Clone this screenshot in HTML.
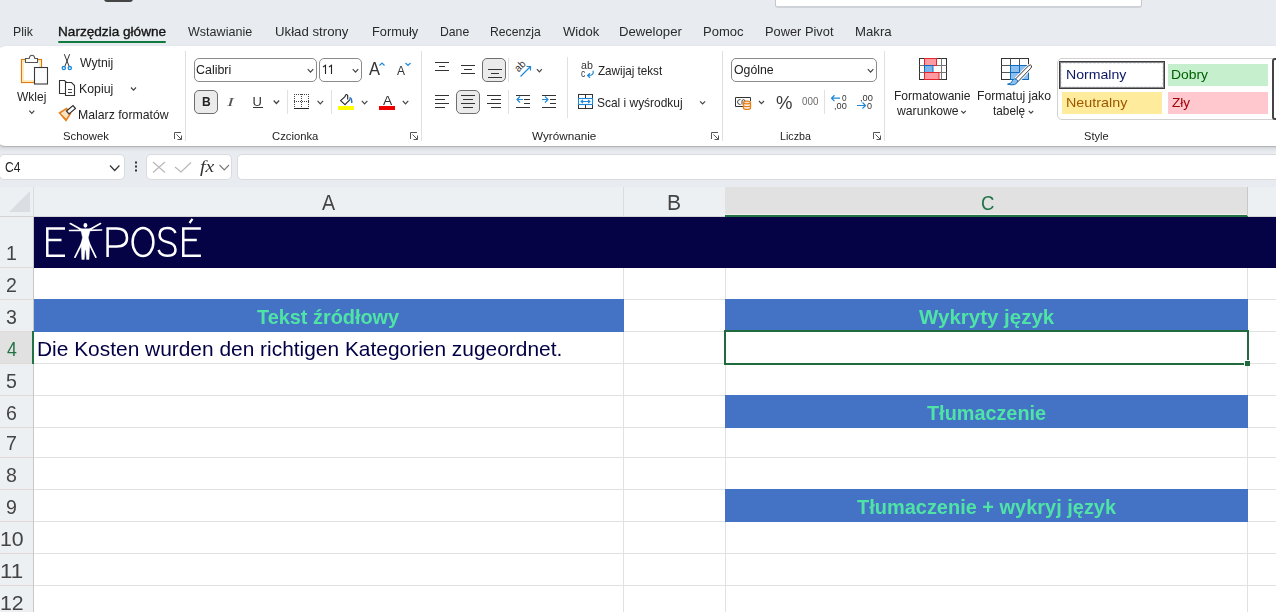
<!DOCTYPE html>
<html><head><meta charset="utf-8"><style>
html,body{margin:0;padding:0}
body{width:1276px;height:612px;overflow:hidden;position:relative;background:#e8ecf0;font-family:"Liberation Sans",sans-serif}
#L0 div,#L1 div{position:absolute;box-sizing:border-box}
#T{position:absolute;left:0;top:0;width:1276px;height:612px;will-change:transform}
#T span{position:absolute;white-space:nowrap;line-height:1;transform-origin:0 0}
svg{position:absolute;left:0;top:0}
</style></head><body>
<div id="L0">
<div style="position:absolute;left:104px;top:-6px;width:29px;height:8px;background:#454545;border-radius:3px"></div>
<div style="position:absolute;left:775px;top:-10px;width:367px;height:18px;background:#fff;border:1px solid #c4c7cb;border-bottom:2px solid #cfd2d6;border-radius:3px"></div>
<div style="position:absolute;left:58px;top:41px;width:108px;height:2px;background:#117a3e;border-radius:1px"></div>
<div style="position:absolute;left:0;top:146px;width:1276px;height:6px;background:linear-gradient(#d9dbe0,#e1e4e8 45%,#e8ecf0)"></div>
</div>
<svg id="S0" width="1276" height="612" style="position:absolute;left:0;top:0">
</svg>
<div id="L1" style="position:absolute;left:0;top:0;width:1276px;height:612px">
<div style="position:absolute;left:-3px;top:46px;width:1300px;height:100px;background:#fff;border-radius:8px;box-shadow:0 1px 1px rgba(0,0,0,0.14), 0 2px 4px rgba(0,0,0,0.06), 0 0 1px rgba(0,0,0,0.12)"></div>
<div style="position:absolute;left:194px;top:58px;width:123px;height:24px;border:1px solid #8a8a8a;border-radius:5px;background:#fff"></div>
<div style="position:absolute;left:319px;top:58px;width:43px;height:24px;border:1px solid #8a8a8a;border-radius:5px;background:#fff"></div>
<div style="position:absolute;left:194px;top:90px;width:24px;height:24px;border:1px solid #6e6e6e;border-radius:5px;background:#ebebeb"></div>
<div style="position:absolute;left:482px;top:58px;width:24px;height:24px;border:1px solid #6e6e6e;border-radius:5px;background:#ebebeb"></div>
<div style="position:absolute;left:456px;top:90px;width:24px;height:24px;border:1px solid #6e6e6e;border-radius:5px;background:#ebebeb"></div>
<div style="position:absolute;left:731px;top:58px;width:146px;height:24px;border:1px solid #8a8a8a;border-radius:5px;background:#fff"></div>
<div style="position:absolute;left:1057px;top:58px;width:230px;height:62px;border:1px solid #d0d0d0;border-radius:5px;background:#fff"></div>
<div style="position:absolute;left:1059px;top:61px;width:106px;height:28px;border:1px solid #3c3c3c;box-shadow:inset 0 0 0 1px #8a8a8a;background:#fff"></div>
<div style="position:absolute;left:1272px;top:58px;width:20px;height:62px;border:2px solid #444;border-radius:3px;background:#fff"></div>
<div style="position:absolute;left:-1px;top:154px;width:126px;height:26px;border:1px solid #d9dbde;border-radius:5px;background:#fff"></div>
<div style="position:absolute;left:146px;top:154px;width:86px;height:26px;border:1px solid #d9dbde;border-radius:5px;background:#fff"></div>
<div style="position:absolute;left:237px;top:154px;width:1060px;height:26px;border:1px solid #d9dbde;border-radius:5px;background:#fff"></div>
</div>
<svg width="1276" height="612" viewBox="0 0 1276 612" shape-rendering="auto">
<rect x="185" y="51" width="1" height="90" fill="#e0e0e0"/>
<rect x="421" y="51" width="1" height="90" fill="#e0e0e0"/>
<rect x="722" y="51" width="1" height="90" fill="#e0e0e0"/>
<rect x="884" y="51" width="1" height="90" fill="#e0e0e0"/>
<rect x="287" y="90" width="1" height="24" fill="#e0e0e0"/>
<rect x="331" y="90" width="1" height="24" fill="#e0e0e0"/>
<rect x="508" y="58" width="1" height="24" fill="#e0e0e0"/>
<rect x="508" y="90" width="1" height="24" fill="#e0e0e0"/>
<rect x="567" y="57" width="1" height="61" fill="#e0e0e0"/>
<rect x="824" y="90" width="1" height="24" fill="#e0e0e0"/>
<g stroke="#555" stroke-width="1" fill="none"><path d="M174.5 139V132.5H181"/><path d="M176.5 134.5L181.5 139.5M177.5 139.5H181.5V135.5"/></g>
<g stroke="#555" stroke-width="1" fill="none"><path d="M410.5 139V132.5H417"/><path d="M412.5 134.5L417.5 139.5M413.5 139.5H417.5V135.5"/></g>
<g stroke="#555" stroke-width="1" fill="none"><path d="M711.5 139V132.5H718"/><path d="M713.5 134.5L718.5 139.5M714.5 139.5H718.5V135.5"/></g>
<g stroke="#555" stroke-width="1" fill="none"><path d="M873.5 139V132.5H880"/><path d="M875.5 134.5L880.5 139.5M876.5 139.5H880.5V135.5"/></g>
<path d="M29.3 110.7L31.8 113.3L34.3 110.7" fill="none" stroke="#444" stroke-width="1.2"/>
<path d="M131.0 87.5L133.5 90.1L136.0 87.5" fill="none" stroke="#444" stroke-width="1.2"/>
<rect x="21.5" y="59.5" width="20" height="23" fill="#fff" stroke="#e07a10" stroke-width="1.2"/>
<rect x="23" y="61" width="17" height="20" fill="none" stroke="#fbe4a8" stroke-width="1.4"/>
<path d="M25.5 62.5V58.5H29.2Q29.5 55.2 32 55.2Q34.5 55.2 34.8 58.5H37.5V62.5Z" fill="#fff" stroke="#555" stroke-width="1.1"/>
<rect x="34.5" y="67.5" width="13" height="16.5" fill="#fbfcfe" stroke="#3a3a3a" stroke-width="1.1"/>
<g fill="none" stroke="#333" stroke-width="1"><path d="M64.3 54.2L69.1 66.3M69.7 54.2L64.9 66.3"/></g>
<g fill="none" stroke="#1e88d8" stroke-width="1.3"><circle cx="63.8" cy="68.1" r="1.6"/><circle cx="69.8" cy="68.1" r="1.6"/></g>
<g fill="#fff" stroke="#333" stroke-width="1.1"><path d="M65.5 93.5H59.5V80.5H64.5L66.5 82.5"/><path d="M65.5 82.5H71.5L74.5 85.5V95.5H65.5Z"/><path d="M68 89.5H72M68 92.5H72" stroke-width="0.9"/></g>
<path d="M59.5 113L66.5 108.5L70.5 113.5L66 120.5Z" fill="#fbe3c2" stroke="#e8801a" stroke-width="1.5"/>
<path d="M61 114.5L66 119" stroke="#e8801a" stroke-width="1"/>
<path d="M66.5 111L73 105.5L75.5 108.5L69 114Z" fill="#fff" stroke="#333" stroke-width="1.2"/>
<path d="M325.5 74V65.3L323 67M331.5 74V65.3L329 67" fill="none" stroke="#222" stroke-width="1.1"/>
<path d="M307.75 69.1L310.5 72.1L313.25 69.1" fill="none" stroke="#444" stroke-width="1.2"/>
<path d="M352.75 69.1L355.5 72.1L358.25 69.1" fill="none" stroke="#444" stroke-width="1.2"/>
<path d="M379.5 65.5L382 63L384.5 65.5" fill="none" stroke="#1e88d8" stroke-width="1.2"/>
<path d="M405.5 63L408 65.5L410.5 63" fill="none" stroke="#1e88d8" stroke-width="1.2"/>
<rect x="253" y="107" width="10" height="1" fill="#333"/>
<path d="M273.65 100.5L276.4 103.5L279.15 100.5" fill="none" stroke="#444" stroke-width="1.2"/>
<g fill="none" stroke="#444" stroke-width="1" stroke-dasharray="1 1" shape-rendering="crispEdges"><path d="M294.5 94V108M308.5 94V108M294 94.5H309M301.5 94V108M294 101.5H309"/></g>
<rect x="294" y="108" width="15" height="1" fill="#222"/>
<path d="M317.55 100.8L320.3 103.8L323.05 100.8" fill="none" stroke="#444" stroke-width="1.2"/>
<path d="M345.3 96.3L340.6 100.6L345 104.6L350.2 99.3" fill="#fff" stroke="#222" stroke-width="1.1" stroke-linejoin="round"/><path d="M345.3 96.6V95.5Q346.5 93.5 347.7 95.5V99.6" fill="none" stroke="#222" stroke-width="1.1"/><path d="M349.3 98.3Q351.8 97 351.8 103" fill="none" stroke="#1e78d0" stroke-width="1.5"/>
<rect x="338" y="106" width="16" height="4" fill="#ffff00" />
<path d="M361.85 100.8L364.6 103.8L367.35 100.8" fill="none" stroke="#444" stroke-width="1.2"/>
<rect x="379" y="106" width="16" height="4" fill="#ef0000" />
<path d="M402.75 100.8L405.5 103.8L408.25 100.8" fill="none" stroke="#444" stroke-width="1.2"/>
<rect x="435" y="62" width="14" height="1" fill="#333"/>
<rect x="439" y="66" width="6" height="1" fill="#333"/>
<rect x="435" y="70" width="14" height="1" fill="#333"/>
<rect x="461" y="65" width="14" height="1" fill="#333"/>
<rect x="464" y="69" width="8" height="1" fill="#333"/>
<rect x="461" y="73" width="14" height="1" fill="#333"/>
<rect x="488" y="69" width="14" height="1" fill="#333"/>
<rect x="491" y="73" width="8" height="1" fill="#333"/>
<rect x="488" y="77" width="14" height="1" fill="#333"/>
<rect x="435" y="95" width="14" height="1" fill="#333"/>
<rect x="435" y="99" width="10" height="1" fill="#333"/>
<rect x="435" y="103" width="14" height="1" fill="#333"/>
<rect x="435" y="107" width="10" height="1" fill="#333"/>
<rect x="461" y="95" width="14" height="1" fill="#333"/>
<rect x="463" y="99" width="10" height="1" fill="#333"/>
<rect x="461" y="103" width="14" height="1" fill="#333"/>
<rect x="463" y="107" width="10" height="1" fill="#333"/>
<rect x="487" y="95" width="14" height="1" fill="#333"/>
<rect x="491" y="99" width="10" height="1" fill="#333"/>
<rect x="487" y="103" width="14" height="1" fill="#333"/>
<rect x="491" y="107" width="10" height="1" fill="#333"/>
<rect x="516" y="95" width="14" height="1" fill="#333"/>
<rect x="524" y="99" width="6" height="1" fill="#333"/>
<rect x="524" y="103" width="6" height="1" fill="#333"/>
<rect x="516" y="107" width="14" height="1" fill="#333"/>
<path d="M523 99.5H517M520 96.5L517 99.5L520 102.5" fill="none" stroke="#1e88d8" stroke-width="1.1"/>
<rect x="542" y="95" width="14" height="1" fill="#333"/>
<rect x="550" y="99" width="6" height="1" fill="#333"/>
<rect x="550" y="103" width="6" height="1" fill="#333"/>
<rect x="542" y="107" width="14" height="1" fill="#333"/>
<path d="M542 99.5H548M545 96.5L548 99.5L545 102.5" fill="none" stroke="#1e88d8" stroke-width="1.1"/>
<text x="0" y="0" transform="translate(518.5 72.5) rotate(-45)" font-family="Liberation Sans" font-size="10.5" fill="#333" textLength="11" lengthAdjust="spacingAndGlyphs">ab</text>
<path d="M520.5 76.5L530.5 66.5M526.5 66.5H530.5V70.5" fill="none" stroke="#1e88d8" stroke-width="1.2"/>
<path d="M536.9 69.2L539.4 71.8L541.9 69.2" fill="none" stroke="#444" stroke-width="1.2"/>
<path d="M593 70.8Q594.5 75.5 588 75.5M590 73.3L587.6 75.5L590 77.8" fill="none" stroke="#1e88d8" stroke-width="1.2"/>
<g fill="none" stroke="#333" stroke-width="1"><rect x="578.5" y="94.5" width="14" height="14"/><path d="M578.5 98.5H592.5M578.5 104.5H592.5M585.5 94.5V98.5M585.5 104.5V108.5"/></g>
<rect x="579" y="99" width="13" height="5" fill="#fff" />
<g fill="none" stroke="#1e88d8" stroke-width="1.1"><rect x="578.5" y="98.5" width="14" height="6"/><path d="M581 101.5H590M583 99.8L581 101.5L583 103.2M588 99.8L590 101.5L588 103.2"/></g>
<path d="M700.1 101.3L702.6 103.89999999999999L705.1 101.3" fill="none" stroke="#444" stroke-width="1.2"/>
<path d="M867.85 69.1L870.6 72.1L873.35 69.1" fill="none" stroke="#444" stroke-width="1.2"/>
<g fill="none" stroke="#333" stroke-width="1"><path d="M743 106.5H735.5V97.5H750.5V101"/></g>
<path d="M740.5 99.5Q737.5 99.5 737.5 102Q737.5 104.5 740.5 104.5M742 104.5V101Q742 99.7 743.5 99.7Q745 99.7 745 101" fill="none" stroke="#333" stroke-width="0.9"/>
<g fill="#fff" stroke="#e8801a" stroke-width="1.3"><path d="M743.5 102.5V108A3.5 1.4 0 0 0 750.5 108V102.5"/><ellipse cx="747" cy="102.5" rx="3.5" ry="1.4" fill="#fbe3c2"/><path d="M743.5 105.3A3.5 1.4 0 0 0 750.5 105.3"/></g>
<path d="M759.0 101.0L761.5 103.6L764.0 101.0" fill="none" stroke="#444" stroke-width="1.2"/>
<path d="M840 98.2H831.5M834.5 95.3L831.5 98.2L834.5 101.2" fill="none" stroke="#1e88d8" stroke-width="1.2"/>
<path d="M857 105.5H865.5M862.5 102.5L865.5 105.5L862.5 108.5" fill="none" stroke="#1e88d8" stroke-width="1.2"/>
<g><rect x="919.5" y="58.5" width="27" height="21" fill="#fff" stroke="#333" stroke-width="1"/><path d="M919.5 65.5H946.5M919.5 72.5H946.5M941.5 58.5V79.5M924.5 58.5V79.5" stroke="#777" stroke-width="1" fill="none"/><rect x="924.5" y="58.5" width="12" height="7" fill="#ff9aa2" stroke="#e3262b" stroke-width="1"/><rect x="924.5" y="65.5" width="8.5" height="7" fill="#7cb5ec" stroke="#0f6cbd" stroke-width="1"/><rect x="924.5" y="72.5" width="14.5" height="7" fill="#ff9aa2" stroke="#e3262b" stroke-width="1"/></g>
<path d="M961.25 110.8L963.5 113.2L965.75 110.8" fill="none" stroke="#444" stroke-width="1.2"/>
<g><rect x="1001.5" y="58.5" width="27" height="21" fill="#fff" stroke="#333" stroke-width="1"/><path d="M1010.5 58.5V79.5M1019.5 58.5V65.5M1001.5 65.5H1010.5M1001.5 72.5H1010.5" stroke="#555" stroke-width="1" fill="none"/><rect x="1010.5" y="65.5" width="18" height="14" fill="#8ec0ef" stroke="#0f6cbd" stroke-width="1"/><path d="M1010.5 72.5H1028.5M1019.5 65.5V79.5" stroke="#0f6cbd" stroke-width="1" fill="none"/><path d="M1014.5 79.5L1028.5 65.5Q1031 63.5 1031.8 65.5Q1032.5 67 1030.5 69L1018 82Z" fill="#fff" stroke="#fff" stroke-width="2.2"/><path d="M1015 79.5L1028.5 65.8Q1030.8 64 1031.5 65.8Q1032 67 1030.3 68.8L1017.8 81.8Z" fill="#fff" stroke="#333" stroke-width="1"/><path d="M1007.5 84.2Q1011.5 84 1012.5 80.5Q1014 77.5 1016.5 79.5L1017.8 81Q1016.5 86.5 1007.5 84.2Z" fill="#8ec0ef" stroke="#0f6cbd" stroke-width="1"/></g>
<path d="M1028.75 110.8L1031 113.2L1033.25 110.8" fill="none" stroke="#444" stroke-width="1.2"/>
<rect x="1061.5" y="63.5" width="101" height="23" fill="none" stroke="#dde3ea" stroke-width="1" stroke-dasharray="2 2"/>
<rect x="1168" y="64" width="100" height="22" fill="#c6efce" />
<rect x="1062" y="92" width="100" height="22" fill="#ffeb9c" />
<rect x="1168" y="92" width="100" height="22" fill="#ffc7ce" />
<path d="M110 165.5L114.7 170.5L119.4 165.5" fill="none" stroke="#333" stroke-width="1.2"/>
<rect x="135" y="161.5" width="2" height="2" fill="#333"/>
<rect x="135" y="165.5" width="2" height="2" fill="#333"/>
<rect x="135" y="169.5" width="2" height="2" fill="#333"/>
<path d="M153 162L165 172.5M165 162L153 172.5" stroke="#b8b8b8" stroke-width="1.2" fill="none"/>
<path d="M175 167L181 172L191 162.5" stroke="#b8b8b8" stroke-width="1.2" fill="none"/>
<path d="M219.5 165L224.3 170L229 165" fill="none" stroke="#777" stroke-width="1.1"/>
<rect x="0" y="187" width="1276" height="30" fill="#edf0f3" />
<rect x="0" y="217" width="34" height="395" fill="#edf0f3" />
<path d="M9 212L30 191V212Z" fill="#dadde1"/>
<rect x="33" y="187" width="1" height="30" fill="#dcdcdc"/>
<rect x="33" y="217" width="1" height="395" fill="#c8c8c8"/>
<rect x="0" y="216" width="1276" height="1" fill="#d4d4d4"/>
<rect x="623" y="187" width="1" height="29" fill="#dcdcdc"/>
<rect x="725" y="187" width="1" height="29" fill="#dcdcdc"/>
<rect x="725" y="187" width="523" height="28" fill="#e1e1e1" />
<rect x="725" y="214" width="523" height="1" fill="#f0eeee"/>
<rect x="725" y="215" width="523" height="2" fill="#217346"/>
<rect x="1247" y="187" width="1" height="29" fill="#c8c8c8"/>
<rect x="34" y="217" width="1242" height="395" fill="#ffffff" />
<rect x="34" y="267" width="1242" height="1" fill="#e1e1e1"/>
<rect x="0" y="267" width="33" height="1" fill="#e3d9d6"/>
<rect x="34" y="299" width="1242" height="1" fill="#e1e1e1"/>
<rect x="0" y="299" width="33" height="1" fill="#e3d9d6"/>
<rect x="34" y="331" width="1242" height="1" fill="#e1e1e1"/>
<rect x="0" y="331" width="33" height="1" fill="#e3d9d6"/>
<rect x="34" y="363" width="1242" height="1" fill="#e1e1e1"/>
<rect x="0" y="363" width="33" height="1" fill="#e3d9d6"/>
<rect x="34" y="395" width="1242" height="1" fill="#e1e1e1"/>
<rect x="0" y="395" width="33" height="1" fill="#e3d9d6"/>
<rect x="34" y="427" width="1242" height="1" fill="#e1e1e1"/>
<rect x="0" y="427" width="33" height="1" fill="#e3d9d6"/>
<rect x="34" y="457" width="1242" height="1" fill="#e1e1e1"/>
<rect x="0" y="457" width="33" height="1" fill="#e3d9d6"/>
<rect x="34" y="489" width="1242" height="1" fill="#e1e1e1"/>
<rect x="0" y="489" width="33" height="1" fill="#e3d9d6"/>
<rect x="34" y="521" width="1242" height="1" fill="#e1e1e1"/>
<rect x="0" y="521" width="33" height="1" fill="#e3d9d6"/>
<rect x="34" y="553" width="1242" height="1" fill="#e1e1e1"/>
<rect x="0" y="553" width="33" height="1" fill="#e3d9d6"/>
<rect x="34" y="585" width="1242" height="1" fill="#e1e1e1"/>
<rect x="0" y="585" width="33" height="1" fill="#e3d9d6"/>
<rect x="623" y="217" width="1" height="395" fill="#e1e1e1"/>
<rect x="725" y="217" width="1" height="395" fill="#e1e1e1"/>
<rect x="1247" y="217" width="1" height="395" fill="#e1e1e1"/>
<rect x="34" y="217" width="1242" height="51" fill="#050346" />
<rect x="34" y="299" width="590" height="33" fill="#4472c4" />
<rect x="725" y="299" width="523" height="33" fill="#4472c4" />
<rect x="725" y="395" width="523" height="33" fill="#4472c4" />
<rect x="725" y="489" width="523" height="33" fill="#4472c4" />
<rect x="0" y="332" width="33" height="31" fill="#e1e1e1" />
<rect x="32" y="331" width="2" height="33" fill="#217346"/>
<rect x="725" y="331" width="523" height="33" fill="none" stroke="#1f6b3e" stroke-width="2"/>
<rect x="1245" y="361" width="5" height="5" fill="#1f6b3e" />
<rect x="1244" y="360" width="1" height="7" fill="#fff" />
<rect x="1245" y="360" width="6" height="1" fill="#fff" />
<g fill="none" stroke="#fff" stroke-width="2.5" stroke-linecap="butt"><path d="M65 228.5H47.3V255.8H65M47.3 239.9H61.5"/><path d="M107.6 257V228.5H116.5Q127 228.5 127 238Q127 246.5 116.5 246.5H107.6"/><ellipse cx="143" cy="242" rx="10.4" ry="14"/><path d="M175.5 233Q173.5 228 167.5 228Q159.6 228 159.6 235Q159.6 240.5 167 242Q175.5 243.8 175.5 249.5Q175.5 255.8 167.5 255.8Q160.5 255.8 158.5 250"/><path d="M200.9 228.5H183.3V255.8H200.9M183.3 239.9H196.8"/></g><path d="M189.5 223L192.5 218.8" stroke="#fff" stroke-width="2.2"/>
<g fill="#fff" stroke="#fff" stroke-linejoin="round"><ellipse cx="85.4" cy="225.3" rx="1.9" ry="2.4" stroke="none"/><path d="M80.5 228.8H90.5L88.3 237.5L89.8 244L89 259.5H86.5L85.8 250H85L84.3 259.5H81.8L81 244L82.5 237.5Z" stroke-width="0.4"/><path d="M83 230.5L70.3 223.6M88 230.5L100.5 223.6M83 230.3L69.6 230.5M88 230.3L101.6 230M83 241L75 257.2M88 241L95.8 257.2" stroke-width="1.7" stroke-linecap="round" fill="none"/></g>
</svg>
<div id="T">
<span style="left:12.75px;top:25.00px;font-size:13px;font-family:'Liberation Sans';font-weight:400;font-style:normal;color:#2a2a2a;transform:scaleX(0.9450);">Plik</span>
<span style="left:57.85px;top:25.00px;font-size:13px;font-family:'Liberation Sans';font-weight:400;font-style:normal;color:#141414;transform:scaleX(1.0461);-webkit-text-stroke:0.35px #141414;">Narzędzia główne</span>
<span style="left:187.50px;top:25.00px;font-size:13px;font-family:'Liberation Sans';font-weight:400;font-style:normal;color:#2a2a2a;transform:scaleX(0.9652);">Wstawianie</span>
<span style="left:274.78px;top:25.00px;font-size:13px;font-family:'Liberation Sans';font-weight:400;font-style:normal;color:#2a2a2a;transform:scaleX(1.0169);">Układ strony</span>
<span style="left:372.02px;top:25.00px;font-size:13px;font-family:'Liberation Sans';font-weight:400;font-style:normal;color:#2a2a2a;transform:scaleX(0.9826);">Formuły</span>
<span style="left:440.06px;top:25.00px;font-size:13px;font-family:'Liberation Sans';font-weight:400;font-style:normal;color:#2a2a2a;transform:scaleX(0.9400);">Dane</span>
<span style="left:490.06px;top:25.00px;font-size:13px;font-family:'Liberation Sans';font-weight:400;font-style:normal;color:#2a2a2a;transform:scaleX(0.9358);">Recenzja</span>
<span style="left:563.00px;top:25.00px;font-size:13px;font-family:'Liberation Sans';font-weight:400;font-style:normal;color:#2a2a2a;transform:scaleX(1.0056);">Widok</span>
<span style="left:619.29px;top:25.00px;font-size:13px;font-family:'Liberation Sans';font-weight:400;font-style:normal;color:#2a2a2a;transform:scaleX(1.0115);">Deweloper</span>
<span style="left:703.00px;top:25.00px;font-size:13px;font-family:'Liberation Sans';font-weight:400;font-style:normal;color:#2a2a2a;">Pomoc</span>
<span style="left:764.71px;top:25.00px;font-size:13px;font-family:'Liberation Sans';font-weight:400;font-style:normal;color:#2a2a2a;transform:scaleX(0.9868);">Power Pivot</span>
<span style="left:854.59px;top:25.00px;font-size:13px;font-family:'Liberation Sans';font-weight:400;font-style:normal;color:#2a2a2a;transform:scaleX(1.0143);">Makra</span>
<span style="left:62.72px;top:131.00px;font-size:11.5px;font-family:'Liberation Sans';font-weight:400;font-style:normal;color:#242424;transform:scaleX(0.9848);">Schowek</span>
<span style="left:272.32px;top:131.00px;font-size:11.5px;font-family:'Liberation Sans';font-weight:400;font-style:normal;color:#242424;transform:scaleX(0.9804);">Czcionka</span>
<span style="left:532.30px;top:131.00px;font-size:11.5px;font-family:'Liberation Sans';font-weight:400;font-style:normal;color:#242424;transform:scaleX(1.0190);">Wyrównanie</span>
<span style="left:779.57px;top:131.00px;font-size:11.5px;font-family:'Liberation Sans';font-weight:400;font-style:normal;color:#242424;transform:scaleX(0.9281);">Liczba</span>
<span style="left:1083.54px;top:131.00px;font-size:11.5px;font-family:'Liberation Sans';font-weight:400;font-style:normal;color:#242424;transform:scaleX(0.9625);">Style</span>
<span style="left:17.20px;top:89.70px;font-size:13px;font-family:'Liberation Sans';font-weight:400;font-style:normal;color:#242424;transform:scaleX(0.9226);">Wklej</span>
<span style="left:79.60px;top:55.90px;font-size:13px;font-family:'Liberation Sans';font-weight:400;font-style:normal;color:#242424;transform:scaleX(0.9400);">Wytnij</span>
<span style="left:79.05px;top:81.60px;font-size:13px;font-family:'Liberation Sans';font-weight:400;font-style:normal;color:#242424;transform:scaleX(0.9500);">Kopiuj</span>
<span style="left:78.06px;top:107.50px;font-size:13px;font-family:'Liberation Sans';font-weight:400;font-style:normal;color:#242424;transform:scaleX(0.9432);">Malarz formatów</span>
<span style="left:196.41px;top:64.00px;font-size:12.5px;font-family:'Liberation Sans';font-weight:400;font-style:normal;color:#202020;transform:scaleX(0.9941);">Calibri</span>
<span style="left:369.00px;top:59.60px;font-size:18px;font-family:'Liberation Sans';font-weight:400;font-style:normal;color:#333;transform:scaleX(0.9167);">A</span>
<span style="left:397.00px;top:63.60px;font-size:13.5px;font-family:'Liberation Sans';font-weight:400;font-style:normal;color:#333;transform:scaleX(0.8889);">A</span>
<span style="left:201.67px;top:95.00px;font-size:13px;font-family:'Liberation Sans';font-weight:700;font-style:normal;color:#222;transform:scaleX(0.9250);">B</span>
<span style="left:227.45px;top:95.00px;font-size:13.5px;font-family:'Liberation Serif';font-weight:400;font-style:italic;color:#555;transform:scaleX(1.5500);">I</span>
<span style="left:252.50px;top:95.00px;font-size:13px;font-family:'Liberation Sans';font-weight:400;font-style:normal;color:#333;">U</span>
<span style="left:382.60px;top:93.70px;font-size:13.5px;font-family:'Liberation Sans';font-weight:400;font-style:normal;color:#333;transform:scaleX(1.0222);">A</span>
<span style="left:580.50px;top:61.40px;font-size:10px;font-family:'Liberation Sans';font-weight:400;font-style:normal;color:#333;transform:scaleX(1.0636);">ab</span>
<span style="left:580.50px;top:68.80px;font-size:10px;font-family:'Liberation Sans';font-weight:400;font-style:normal;color:#333;transform:scaleX(0.8600);">c</span>
<span style="left:598.20px;top:64.00px;font-size:13px;font-family:'Liberation Sans';font-weight:400;font-style:normal;color:#242424;transform:scaleX(0.8972);">Zawijaj tekst</span>
<span style="left:597.08px;top:96.30px;font-size:13px;font-family:'Liberation Sans';font-weight:400;font-style:normal;color:#242424;transform:scaleX(0.9187);">Scal i wyśrodkuj</span>
<span style="left:733.72px;top:63.80px;font-size:12.5px;font-family:'Liberation Sans';font-weight:400;font-style:normal;color:#202020;transform:scaleX(0.9821);">Ogólne</span>
<span style="left:775.63px;top:92.90px;font-size:19px;font-family:'Liberation Sans';font-weight:400;font-style:normal;color:#3a3a3a;transform:scaleX(0.9733);">%</span>
<span style="left:801.90px;top:97.00px;font-size:10px;font-family:'Liberation Sans';font-weight:400;font-style:normal;color:#6a6a6a;transform:scaleX(0.9813);">000</span>
<span style="left:841.70px;top:92.70px;font-size:9.6px;font-family:'Liberation Sans';font-weight:400;font-style:normal;color:#333;transform:scaleX(0.8600);">0</span>
<span style="left:833.54px;top:100.80px;font-size:9.6px;font-family:'Liberation Sans';font-weight:400;font-style:normal;color:#333;transform:scaleX(0.9583);">,00</span>
<span style="left:859.53px;top:92.70px;font-size:9.6px;font-family:'Liberation Sans';font-weight:400;font-style:normal;color:#333;transform:scaleX(0.9667);">,00</span>
<span style="left:867.40px;top:100.80px;font-size:9.6px;font-family:'Liberation Sans';font-weight:400;font-style:normal;color:#333;transform:scaleX(0.9400);">0</span>
<span style="left:894.47px;top:88.60px;font-size:13px;font-family:'Liberation Sans';font-weight:400;font-style:normal;color:#242424;transform:scaleX(0.9284);">Formatowanie</span>
<span style="left:897.40px;top:104.40px;font-size:13px;font-family:'Liberation Sans';font-weight:400;font-style:normal;color:#242424;transform:scaleX(0.9369);">warunkowe</span>
<span style="left:977.46px;top:88.60px;font-size:13px;font-family:'Liberation Sans';font-weight:400;font-style:normal;color:#242424;transform:scaleX(0.9390);">Formatuj jako</span>
<span style="left:993.20px;top:104.40px;font-size:13px;font-family:'Liberation Sans';font-weight:400;font-style:normal;color:#242424;transform:scaleX(0.9086);">tabelę</span>
<span style="left:1065.71px;top:67.80px;font-size:13px;font-family:'Liberation Sans';font-weight:400;font-style:normal;color:#0c1766;transform:scaleX(1.0855);">Normalny</span>
<span style="left:1171.13px;top:67.80px;font-size:13px;font-family:'Liberation Sans';font-weight:400;font-style:normal;color:#006100;transform:scaleX(1.0676);">Dobry</span>
<span style="left:1065.70px;top:95.60px;font-size:13px;font-family:'Liberation Sans';font-weight:400;font-style:normal;color:#9c5700;transform:scaleX(1.1018);">Neutralny</span>
<span style="left:1172.20px;top:95.60px;font-size:13px;font-family:'Liberation Sans';font-weight:400;font-style:normal;color:#9c0006;transform:scaleX(1.0471);">Zły</span>
<span style="left:5.04px;top:159.90px;font-size:14px;font-family:'Liberation Sans';font-weight:400;font-style:normal;color:#222;transform:scaleX(0.8647);">C4</span>
<span style="left:199.80px;top:159.00px;font-size:16px;font-family:'Liberation Serif';font-weight:400;font-style:italic;color:#333;transform:scaleX(1.2250);">fx</span>
<span style="left:322.20px;top:192.70px;font-size:21.5px;font-family:'Liberation Sans';font-weight:400;font-style:normal;color:#444;transform:scaleX(0.9143);">A</span>
<span style="left:667.04px;top:192.60px;font-size:21.5px;font-family:'Liberation Sans';font-weight:400;font-style:normal;color:#444;transform:scaleX(0.9818);">B</span>
<span style="left:980.82px;top:192.20px;font-size:21px;font-family:'Liberation Sans';font-weight:400;font-style:normal;color:#217346;transform:scaleX(0.8846);">C</span>
<span style="left:6.26px;top:243.00px;font-size:20.8px;font-family:'Liberation Sans';font-weight:400;font-style:normal;color:#444;transform:scaleX(0.9400);">1</span>
<span style="left:6.26px;top:275.00px;font-size:20.8px;font-family:'Liberation Sans';font-weight:400;font-style:normal;color:#444;transform:scaleX(0.9400);">2</span>
<span style="left:6.26px;top:307.00px;font-size:20.8px;font-family:'Liberation Sans';font-weight:400;font-style:normal;color:#444;transform:scaleX(0.9400);">3</span>
<span style="left:7.20px;top:339.00px;font-size:20.8px;font-family:'Liberation Sans';font-weight:400;font-style:normal;color:#217346;transform:scaleX(0.8545);">4</span>
<span style="left:6.26px;top:371.00px;font-size:20.8px;font-family:'Liberation Sans';font-weight:400;font-style:normal;color:#444;transform:scaleX(0.9400);">5</span>
<span style="left:6.26px;top:403.00px;font-size:20.8px;font-family:'Liberation Sans';font-weight:400;font-style:normal;color:#444;transform:scaleX(0.9400);">6</span>
<span style="left:6.26px;top:433.00px;font-size:20.8px;font-family:'Liberation Sans';font-weight:400;font-style:normal;color:#444;transform:scaleX(0.9400);">7</span>
<span style="left:6.26px;top:465.00px;font-size:20.8px;font-family:'Liberation Sans';font-weight:400;font-style:normal;color:#444;transform:scaleX(0.9400);">8</span>
<span style="left:6.26px;top:497.00px;font-size:20.8px;font-family:'Liberation Sans';font-weight:400;font-style:normal;color:#444;transform:scaleX(0.9400);">9</span>
<span style="left:0.48px;top:528.60px;font-size:20.8px;font-family:'Liberation Sans';font-weight:400;font-style:normal;color:#444;transform:scaleX(1.0238);">10</span>
<span style="left:0.43px;top:560.60px;font-size:20.8px;font-family:'Liberation Sans';font-weight:400;font-style:normal;color:#444;transform:scaleX(1.0750);">11</span>
<span style="left:0.48px;top:592.60px;font-size:20.8px;font-family:'Liberation Sans';font-weight:400;font-style:normal;color:#444;transform:scaleX(1.0238);">12</span>
<span style="left:256.90px;top:306.60px;font-size:20.5px;font-family:'Liberation Sans';font-weight:700;font-style:normal;color:#4fe3a6;transform:scaleX(0.9694);">Tekst źródłowy</span>
<span style="left:919.00px;top:306.60px;font-size:20.5px;font-family:'Liberation Sans';font-weight:700;font-style:normal;color:#4fe3a6;">Wykryty język</span>
<span style="left:927.00px;top:402.60px;font-size:20.5px;font-family:'Liberation Sans';font-weight:700;font-style:normal;color:#4fe3a6;transform:scaleX(0.9675);">Tłumaczenie</span>
<span style="left:857.00px;top:496.60px;font-size:20.5px;font-family:'Liberation Sans';font-weight:700;font-style:normal;color:#4fe3a6;transform:scaleX(0.9737);">Tłumaczenie + wykryj język</span>
<span style="left:36.81px;top:337.80px;font-size:21px;font-family:'Liberation Sans';font-weight:400;font-style:normal;color:#020044;transform:scaleX(0.9954);">Die Kosten wurden den richtigen Kategorien zugeordnet.</span>
</div>
</body></html>
